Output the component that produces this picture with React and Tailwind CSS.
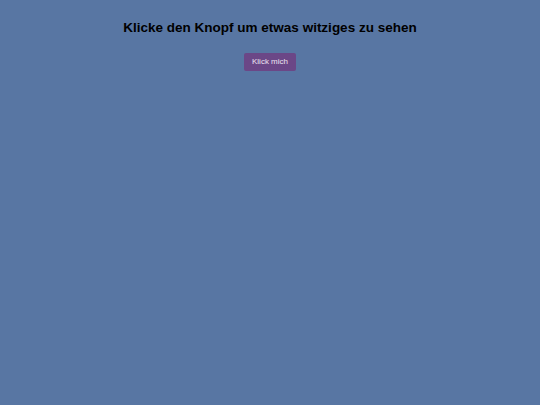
import React, { useState } from 'react';

const App = () => {
  const [clicked, setClicked] = useState(false);

  return (
    <div className="min-h-screen w-full bg-[#5876a3] flex flex-col items-center pt-[20px] font-['Liberation_Sans',Arial,sans-serif]">
      <h1 className="text-[13.5px] leading-[16px] font-bold text-black">
        Klicke den Knopf um etwas witziges zu sehen
      </h1>
      <button
        type="button"
        onClick={() => setClicked(!clicked)}
        className="mt-[17px] h-[18px] w-[52px] rounded-[2px] bg-[#6b4787] text-[8px] leading-[18px] text-[#ece4f2]"
      >
        Klick mich
      </button>
    </div>
  );
};

export default App;
